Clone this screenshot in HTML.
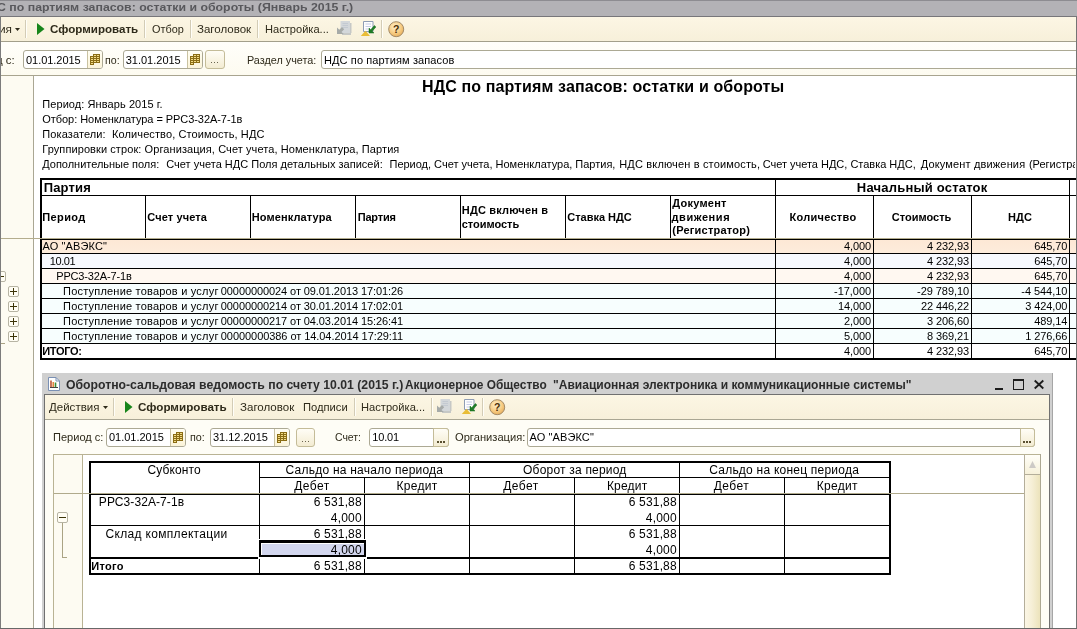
<!DOCTYPE html>
<html lang="ru"><head><meta charset="utf-8"><title>НДС по партиям запасов</title>
<style>
html,body{margin:0;padding:0}
body{width:1077px;height:629px;overflow:hidden;position:relative;background:#fff;font-family:"Liberation Sans",sans-serif;font-size:11px;color:#000}
.r{position:absolute;display:block}
.t{position:absolute;white-space:pre;line-height:1;display:block}
.k{background:#000}
.inp{position:absolute;box-sizing:border-box;background:#fff;border:1px solid #aca994;border-radius:3px}
.btn{position:absolute;box-sizing:border-box;border:1px solid #c4bc98;border-radius:3px;background:linear-gradient(#fffdf6,#f3ecd2)}
.sep{position:absolute;width:1px;background:#d3ccb6;box-shadow:1px 0 0 #fffef8}
svg{position:absolute;overflow:visible}
.ib{position:absolute;width:15px;height:17px;box-sizing:border-box;border-left:1px solid #c9c2a2;border-radius:0 2px 2px 0;background:linear-gradient(#fffdf2,#fbf4d8)}
.tx{position:absolute;left:0;top:0;width:1077px;height:629px;overflow:hidden;will-change:transform}

</style></head><body>
<svg width="0" height="0"><defs>
<radialGradient id="hg" cx=".42" cy=".35" r=".75"><stop offset="0" stop-color="#fff0cc"/><stop offset=".55" stop-color="#f7cd84"/><stop offset="1" stop-color="#e2a550"/></radialGradient>
<g id="ic1"><path d="M3.500 1h9.500v12h-9.500z" fill="#d3d7da"/><path d="M5 13h9v2h-9z" fill="#c6c8c6"/><path d="M13 3h1.500v10h-1.500z" fill="#c6c8c6"/><path d="M5.500 3.500h5.500M5.500 5.500h5.500M5.500 7.500h5.500" stroke="#c3c9d1" stroke-width="1"/><path d="M0 14V7.500l2.300 2.300 2.700-2.700 2.200 2.200-2.700 2.700L6.800 14z" fill="#a6aaa8"/></g>
<g id="ic2"><path d="M3.500 1.500h9.500v10h-9.500z" fill="#fefefe" stroke="#8e9cb4"/><path d="M5.500 4h5.500M5.500 6.500h5.500M5.500 9h3" stroke="#b9bfe0" stroke-width=".8"/><path d="M.8 16l4.700-5.200 4.500 5.200z" fill="#e9bd36"/><path d="M9 13V8l1.700 1.700 3.700-4.200 1.500 1.500-3.700 4.200L14 13z" fill="#1f7d26" stroke="#176a1e" stroke-width=".5"/></g>
<g id="ic3"><circle cx="8.200" cy="8.200" r="7.500" fill="url(#hg)" stroke="#a38a66" stroke-width="1"/><text x="8.300" y="12" text-anchor="middle" font-family="Liberation Sans, sans-serif" font-weight="bold" font-size="10.500" fill="#4a2e08">?</text></g>
<g id="calg"><path d="M0 2h4v9H0z" fill="#8a6c14"/><path d="M3 0h7v9H3z" fill="#8a6c14"/><path d="M1 3h2v1H1zM1 5h2v1H1zM1 7h2v1H1zM1 9h2v1H1z" fill="#f3dc86"/><path d="M4 1h2v1H4zM4 3h2v1H4zM4 5h2v1H4zM4 7h2v1H4zM7 1h2v1H7zM7 3h2v1H7zM7 5h2v1H7zM7 7h2v1H7z" fill="#f3dc86"/></g>
</defs></svg>
<!-- ===== main window chrome ===== -->
<i class="r" style="left:0;top:0;width:1077px;height:16px;background:#b3b2b6"></i>
<i class="r" style="left:0;top:0;width:1077px;height:1px;background:#8d8c91"></i>
<i class="r" style="left:0;top:16px;width:1077px;height:1px;background:#77767a"></i>
<i class="r" style="left:0;top:17px;width:1077px;height:24px;background:linear-gradient(#fcf6e4,#f7f0da)"></i>
<i class="r" style="left:0;top:41px;width:1077px;height:1px;background:#a39f8b"></i>
<i class="r" style="left:0;top:42px;width:1077px;height:33px;background:linear-gradient(#fffefa,#fdfbf0)"></i>
<i class="r" style="left:0;top:75px;width:1077px;height:1px;background:#a8a48f"></i>
<!-- group column -->
<i class="r" style="left:1px;top:76px;width:32px;height:552px;background:#fdfbf2"></i>
<i class="r" style="left:33px;top:76px;width:1px;height:552px;background:#aaa793"></i>
<!-- window borders -->

<!-- toolbar items -->
<svg style="left:15px;top:28px" width="5" height="3" viewBox="0 0 5 3"><path d="M0 0h5L2.5 3z" fill="#2e2a1a"/></svg>
<i class="sep" style="left:25px;top:20px;height:18px"></i>
<svg style="left:37px;top:23px" width="8" height="12" viewBox="0 0 8 12"><path d="M0 0L7.5 6L0 12z" fill="#17851a"/></svg>
<i class="sep" style="left:144px;top:20px;height:18px"></i>
<i class="sep" style="left:190px;top:20px;height:18px"></i>
<i class="sep" style="left:257px;top:20px;height:18px"></i>
<i class="sep" style="left:381px;top:20px;height:18px"></i>
<svg style="left:337px;top:20px" width="16" height="16" viewBox="0 0 16 16"><use href="#ic1"/></svg>
<svg style="left:360px;top:20px" width="17" height="16" viewBox="0 0 17 16"><use href="#ic2"/></svg>
<svg style="left:388px;top:21px" width="17" height="17" viewBox="0 0 17 17"><use href="#ic3"/></svg>

<!-- filter row -->
<div class="inp" style="left:23px;top:50px;width:80px;height:19px"></div><div class="ib" style="left:87px;top:51px"></div>
<div class="inp" style="left:123px;top:50px;width:80px;height:19px"></div><div class="ib" style="left:187px;top:51px"></div>
<div class="btn" style="left:205px;top:50px;width:20px;height:19px"></div>
<div class="inp" style="left:321px;top:50px;width:770px;height:19px"></div>
<svg style="left:90px;top:54px" width="10" height="11" viewBox="0 0 10 11"><use href="#calg"/></svg>
<svg style="left:190px;top:54px" width="10" height="11" viewBox="0 0 10 11"><use href="#calg"/></svg>
<i class="r" style="left:211px;top:62px;width:1px;height:1px;background:#6a6450;box-shadow:3px 0 0 #6a6450,6px 0 0 #6a6450"></i>

<!-- ===== main table ===== -->
<i class="r" style="left:42px;top:240px;width:1034px;height:13px;background:linear-gradient(#fde8d5,#fdecdc)"></i>
<i class="r" style="left:42px;top:254px;width:1034px;height:14px;background:#f7f9fe"></i>
<i class="r" style="left:42px;top:269px;width:1034px;height:14px;background:#fff8f1"></i>
<i class="r" style="left:42px;top:284px;width:1034px;height:59px;background:#f7fefe"></i>
<!-- horizontals -->
<i class="r k" style="left:40px;top:178px;width:1036px;height:2px"></i>
<i class="r k" style="left:40px;top:195px;width:1036px;height:1px"></i>
<i class="r k" style="left:40px;top:239px;width:1036px;height:1px"></i>
<i class="r k" style="left:40px;top:253px;width:1036px;height:1px"></i>
<i class="r k" style="left:40px;top:268px;width:1036px;height:1px"></i>
<i class="r k" style="left:40px;top:283px;width:1036px;height:1px"></i>
<i class="r k" style="left:40px;top:298px;width:1036px;height:1px"></i>
<i class="r k" style="left:40px;top:313px;width:1036px;height:1px"></i>
<i class="r k" style="left:40px;top:328px;width:1036px;height:1px"></i>
<i class="r k" style="left:40px;top:343px;width:1036px;height:1px"></i>
<i class="r k" style="left:40px;top:358px;width:1036px;height:2px"></i>
<!-- verticals -->
<i class="r k" style="left:40px;top:178px;width:2px;height:182px"></i>
<i class="r k" style="left:145px;top:195px;width:1px;height:43px"></i>
<i class="r k" style="left:250px;top:195px;width:1px;height:43px"></i>
<i class="r k" style="left:355px;top:195px;width:1px;height:43px"></i>
<i class="r k" style="left:460px;top:195px;width:1px;height:43px"></i>
<i class="r k" style="left:565px;top:195px;width:1px;height:43px"></i>
<i class="r k" style="left:670px;top:195px;width:1px;height:43px"></i>
<i class="r k" style="left:775px;top:178px;width:1px;height:182px"></i>
<i class="r k" style="left:873px;top:195px;width:1px;height:165px"></i>
<i class="r k" style="left:971px;top:195px;width:1px;height:165px"></i>
<i class="r k" style="left:1069px;top:178px;width:1px;height:182px"></i>
<i class="r" style="left:1px;top:238px;width:1075px;height:1px;background:#b4ad8e"></i>
<!-- plus boxes -->
<svg style="left:8px;top:286px" width="11" height="11" viewBox="0 0 11 11"><use href="#plus"/></svg>
<svg style="left:8px;top:301px" width="11" height="11" viewBox="0 0 11 11"><use href="#plus"/></svg>
<svg style="left:8px;top:316px" width="11" height="11" viewBox="0 0 11 11"><use href="#plus"/></svg>
<svg style="left:8px;top:331px" width="11" height="11" viewBox="0 0 11 11"><use href="#plus"/></svg>
<svg width="0" height="0"><defs><g id="plus"><rect x=".5" y=".5" width="10" height="10" rx="1.500" fill="#fffdf4" stroke="#b7b4a4"/><path d="M2 5.500h7M5.500 2v7" stroke="#3c3408" stroke-width="1"/></g>
<g id="minus"><rect x=".5" y=".5" width="10" height="10" rx="1.500" fill="#fffdf4" stroke="#b7b4a4"/><path d="M2 5.500h7" stroke="#3c3408" stroke-width="1"/></g></defs></svg>
<svg style="left:-5px;top:271px" width="11" height="11" viewBox="0 0 11 11"><use href="#minus"/></svg>
<i class="r" style="left:1px;top:343px;width:4px;height:1px;background:#aaa384"></i>

<!-- ===== sub window ===== -->
<i class="r" style="left:42px;top:373px;width:1011px;height:256px;background:#d0d0d0"></i>
<i class="r" style="left:1052px;top:373px;width:1px;height:256px;background:#a6a6a6"></i>
<i class="r" style="left:44px;top:394px;width:1006px;height:235px;background:#707070"></i>
<i class="r" style="left:45px;top:395px;width:1004px;height:234px;background:#fefdf6"></i>
<i class="r" style="left:45px;top:395px;width:1004px;height:24px;background:linear-gradient(#fcf6e4,#f7f0da)"></i>
<i class="r" style="left:45px;top:419px;width:1004px;height:1px;background:#a9a693"></i>
<!-- title icon -->
<svg style="left:48px;top:377px" width="12" height="14" viewBox="0 0 12 14"><path d="M.5 .5h7.500l3.500 3.500v9.500h-11z" fill="#fff" stroke="#7a90b4"/><path d="M8 .5v3.500h3.500" fill="none" stroke="#7a90b4"/><path d="M2 10.500h8" stroke="#444"/><path d="M3 10V3.500" stroke="#b03a1c" stroke-width="1.400"/><path d="M5.200 10V5" stroke="#e0782a" stroke-width="1.400"/><path d="M7.500 10V5.500" stroke="#3a8a34" stroke-width="1.600"/></svg>
<!-- window buttons -->
<i class="r" style="left:995px;top:388px;width:8px;height:2px;background:#1c1c1c"></i>
<i class="r" style="left:1013px;top:379px;width:11px;height:11px;box-sizing:border-box;border:1px solid #1c1c1c;border-top-width:2px"></i>
<svg style="left:1034px;top:380px" width="10" height="9" viewBox="0 0 10 9"><path d="M.7 .5l8.600 8M9.300 .5L.7 8.500" stroke="#1c1c1c" stroke-width="1.800"/></svg>
<!-- toolbar -->
<svg style="left:103px;top:406px" width="5" height="3" viewBox="0 0 5 3"><path d="M0 0h5L2.500 3z" fill="#2e2a1a"/></svg>
<i class="sep" style="left:113px;top:398px;height:18px"></i>
<svg style="left:125px;top:401px" width="8" height="12" viewBox="0 0 8 12"><path d="M0 0L7.500 6L0 12z" fill="#17851a"/></svg>
<i class="sep" style="left:232px;top:398px;height:18px"></i>
<i class="sep" style="left:354px;top:398px;height:18px"></i>
<i class="sep" style="left:431px;top:398px;height:18px"></i>
<i class="sep" style="left:482px;top:398px;height:18px"></i>
<svg style="left:437px;top:398px" width="16" height="16" viewBox="0 0 16 16"><use href="#ic1"/></svg>
<svg style="left:461px;top:398px" width="17" height="16" viewBox="0 0 17 16"><use href="#ic2"/></svg>
<svg style="left:489px;top:399px" width="17" height="17" viewBox="0 0 17 17"><use href="#ic3"/></svg>
<!-- filter row -->
<div class="inp" style="left:106px;top:428px;width:80px;height:19px"></div><div class="ib" style="left:170px;top:429px"></div>
<div class="inp" style="left:210px;top:428px;width:80px;height:19px"></div><div class="ib" style="left:274px;top:429px"></div>
<div class="btn" style="left:296px;top:428px;width:19px;height:19px"></div>
<div class="inp" style="left:369px;top:428px;width:80px;height:19px"></div>
<div class="btn" style="left:433px;top:428px;width:16px;height:19px;border-radius:0 3px 3px 0"></div>
<div class="inp" style="left:527px;top:428px;width:508px;height:19px"></div>
<div class="btn" style="left:1020px;top:428px;width:15px;height:19px;border-radius:0 3px 3px 0"></div>
<svg style="left:173px;top:432px" width="10" height="11" viewBox="0 0 10 11"><use href="#calg"/></svg>
<svg style="left:277px;top:432px" width="10" height="11" viewBox="0 0 10 11"><use href="#calg"/></svg>
<i class="r" style="left:302px;top:441px;width:1px;height:1px;background:#6a6450;box-shadow:3px 0 0 #6a6450,6px 0 0 #6a6450"></i>
<i class="r" style="left:437px;top:441px;width:2px;height:2px;background:#5a5030;box-shadow:3px 0 0 #5a5030,6px 0 0 #5a5030"></i>
<i class="r" style="left:1023px;top:441px;width:2px;height:2px;background:#5a5030;box-shadow:3px 0 0 #5a5030,6px 0 0 #5a5030"></i>
<!-- sheet -->
<i class="r" style="left:53px;top:454px;width:988px;height:175px;background:#fff"></i>
<i class="r" style="left:53px;top:454px;width:988px;height:1px;background:#b9b394"></i>
<i class="r" style="left:53px;top:454px;width:1px;height:174px;background:#b9b394"></i>
<i class="r" style="left:54px;top:455px;width:28px;height:174px;background:#fdfbf2"></i>
<i class="r" style="left:82px;top:455px;width:1px;height:174px;background:#b9b394"></i>
<!-- scrollbar -->
<i class="r" style="left:1024px;top:455px;width:16px;height:174px;background:linear-gradient(90deg,#fcf7e8,#f6efd6 50%,#ece3bb)"></i>
<i class="r" style="left:1024px;top:455px;width:1px;height:174px;background:#b4ae9a"></i>
<i class="r" style="left:1040px;top:454px;width:1px;height:175px;background:#aca892"></i>
<i class="r" style="left:1025px;top:455px;width:15px;height:20px;background:linear-gradient(#fffef8,#f6f0d8)"></i>
<i class="r" style="left:1025px;top:474px;width:15px;height:1px;background:#b4ae9a"></i>
<svg style="left:1029px;top:461px" width="7" height="7" viewBox="0 0 7 7"><path d="M3.500 0L7 7H0z" fill="#cdcac6"/></svg>
<!-- sub table -->
<i class="r k" style="left:89px;top:461px;width:802px;height:2px"></i>
<i class="r k" style="left:260px;top:477px;width:630px;height:1px"></i>
<i class="r k" style="left:89px;top:494px;width:802px;height:1px"></i>
<i class="r k" style="left:89px;top:525px;width:802px;height:1px"></i>
<i class="r k" style="left:89px;top:557px;width:802px;height:2px"></i>
<i class="r k" style="left:89px;top:573px;width:802px;height:2px"></i>
<i class="r k" style="left:89px;top:461px;width:2px;height:114px"></i>
<i class="r k" style="left:259px;top:461px;width:1px;height:114px"></i>
<i class="r k" style="left:364px;top:477px;width:1px;height:98px"></i>
<i class="r k" style="left:469px;top:461px;width:1px;height:114px"></i>
<i class="r k" style="left:574px;top:477px;width:1px;height:98px"></i>
<i class="r k" style="left:679px;top:461px;width:1px;height:114px"></i>
<i class="r k" style="left:784px;top:477px;width:1px;height:98px"></i>
<i class="r k" style="left:889px;top:461px;width:2px;height:114px"></i>
<i class="r" style="left:54px;top:493px;width:970px;height:1px;background:#b0aa8c"></i>
<!-- selected cell -->
<i class="r" style="left:258px;top:539px;width:109px;height:20px;background:#fff"></i>
<i class="r k" style="left:259px;top:540px;width:107px;height:17px"></i>
<i class="r" style="left:261px;top:543px;width:103px;height:12px;background:#fff"></i>
<i class="r" style="left:262px;top:544px;width:102px;height:11px;background:#d2d6ee"></i>
<!-- group marks -->
<svg style="left:57px;top:512px" width="11" height="11" viewBox="0 0 11 11"><use href="#minus"/></svg>
<i class="r" style="left:62px;top:523px;width:1px;height:35px;background:#aaa384"></i>
<i class="r" style="left:62px;top:557px;width:5px;height:1px;background:#aaa384"></i>

<div class="tx">
<span class="t" style="left:-2.95px;top:1.60px;font-size:11.5px;font-weight:bold;color:#58585c;transform:scaleX(1.0707);transform-origin:0 0;">С по партиям запасов: остатки и обороты (Январь 2015 г.)</span>
<span class="t" style="left:-1.31px;top:24.00px;font-size:11px;color:#2e2a1a;transform:scaleX(1.0760);transform-origin:0 0;">ия</span>
<span class="t" style="left:50.08px;top:24.00px;font-size:11px;font-weight:bold;color:#2e2a1a;transform:scaleX(1.0529);transform-origin:0 0;">Сформировать</span>
<span class="t" style="left:151.88px;top:24.00px;font-size:11px;color:#2e2a1a;transform:scaleX(0.9903);transform-origin:0 0;">Отбор</span>
<span class="t" style="left:197.09px;top:24.00px;font-size:11px;color:#2e2a1a;transform:scaleX(1.0466);transform-origin:0 0;">Заголовок</span>
<span class="t" style="left:264.89px;top:24.00px;font-size:11px;color:#2e2a1a;transform:scaleX(1.0079);transform-origin:0 0;">Настройка...</span>
<span class="t" style="left:-4.21px;top:55.00px;font-size:11px;color:#2e2a1a;transform:scaleX(1.0388);transform-origin:0 0;">д с:</span>
<span class="t" style="left:25.98px;top:55.00px;font-size:11px;letter-spacing:-0.033px;">01.01.2015</span>
<span class="t" style="left:105.08px;top:55.00px;font-size:11px;color:#2e2a1a;transform:scaleX(0.9663);transform-origin:0 0;">по:</span>
<span class="t" style="left:125.78px;top:55.00px;font-size:11px;letter-spacing:-0.013px;">31.01.2015</span>
<span class="t" style="left:247.09px;top:55.00px;font-size:11px;color:#2e2a1a;transform:scaleX(0.9834);transform-origin:0 0;">Раздел учета:</span>
<span class="t" style="left:323.99px;top:55.00px;font-size:11px;letter-spacing:0.112px;">НДС по партиям запасов</span>
<span class="t" style="left:421.96px;top:79.00px;font-size:16px;font-weight:bold;letter-spacing:0.121px;">НДС по партиям запасов: остатки и обороты</span>
<span class="t" style="left:42.28px;top:99.00px;font-size:11px;letter-spacing:0.078px;">Период: Январь 2015 г.</span>
<span class="t" style="left:42.28px;top:114.00px;font-size:11px;letter-spacing:-0.049px;">Отбор: Номенклатура = РРС3-32А-7-1в</span>
<span class="t" style="left:42.28px;top:129.00px;font-size:11px;letter-spacing:0.106px;">Показатели:  Количество, Стоимость, НДС</span>
<span class="t" style="left:42.28px;top:144.00px;font-size:11px;letter-spacing:0.086px;">Группировки строк: Организация, Счет учета, Номенклатура, Партия</span>
<span class="t" style="left:42.28px;top:159.00px;font-size:11px;letter-spacing:-0.024px;">Дополнительные поля:</span>
<span class="t" style="left:166.28px;top:159.00px;font-size:11px;letter-spacing:0.010px;">Счет учета НДС Поля детальных записей:</span>
<span class="t" style="left:389.49px;top:159.00px;font-size:11px;letter-spacing:-0.008px;">Период, Счет учета, Номенклатура, Партия,</span>
<span class="t" style="left:619.28px;top:159.00px;font-size:11px;letter-spacing:0.157px;">НДС включен в стоимость,</span>
<span class="t" style="left:762.68px;top:159.00px;font-size:11px;letter-spacing:-0.013px;">Счет учета НДС, Ставка НДС,</span>
<span class="t" style="left:920.68px;top:159.00px;font-size:11px;letter-spacing:0.159px;">Документ движения</span>
<span class="t" style="left:1028.88px;top:159.00px;font-size:11px;width:46.5px;overflow:hidden;">(Регистратор)</span>
<span class="t" style="left:43.76px;top:181.00px;font-size:13px;font-weight:bold;letter-spacing:0.149px;">Партия</span>
<span class="t" style="left:42.28px;top:212.00px;font-size:11px;font-weight:bold;letter-spacing:0.395px;">Период</span>
<span class="t" style="left:147.28px;top:212.00px;font-size:11px;font-weight:bold;letter-spacing:0.124px;">Счет учета</span>
<span class="t" style="left:251.69px;top:212.00px;font-size:11px;font-weight:bold;letter-spacing:0.116px;">Номенклатура</span>
<span class="t" style="left:357.69px;top:212.00px;font-size:11px;font-weight:bold;letter-spacing:-0.190px;">Партия</span>
<span class="t" style="left:461.79px;top:205.00px;font-size:11px;font-weight:bold;letter-spacing:0.177px;">НДС включен в</span>
<span class="t" style="left:461.79px;top:219.00px;font-size:11px;font-weight:bold;letter-spacing:-0.029px;">стоимость</span>
<span class="t" style="left:567.28px;top:212.00px;font-size:11px;font-weight:bold;letter-spacing:-0.019px;">Ставка НДС</span>
<span class="t" style="left:672.28px;top:198.00px;font-size:11px;font-weight:bold;letter-spacing:0.245px;">Документ</span>
<span class="t" style="left:671.58px;top:212.00px;font-size:11px;font-weight:bold;letter-spacing:0.553px;">движения</span>
<span class="t" style="left:672.28px;top:225.00px;font-size:11px;font-weight:bold;letter-spacing:0.227px;">(Регистратор)</span>
<span class="t" style="left:856.86px;top:181.00px;font-size:13px;font-weight:bold;letter-spacing:0.204px;">Начальный остаток</span>
<span class="t" style="left:789.58px;top:212.00px;font-size:11px;font-weight:bold;letter-spacing:0.272px;">Количество</span>
<span class="t" style="left:891.68px;top:212.00px;font-size:11px;font-weight:bold;letter-spacing:0.024px;">Стоимость</span>
<span class="t" style="left:1007.99px;top:212.00px;font-size:11px;font-weight:bold;letter-spacing:0.132px;">НДС</span>
<span class="t" style="left:42.48px;top:241.00px;font-size:11px;letter-spacing:0.120px;">АО "АВЭКС"</span>
<span class="t" style="left:49.78px;top:256.00px;font-size:11px;letter-spacing:-0.420px;">10.01</span>
<span class="t" style="left:56.28px;top:271.00px;font-size:11px;letter-spacing:-0.141px;">РРС3-32А-7-1в</span>
<span class="t" style="left:63.08px;top:286.00px;font-size:11px;letter-spacing:0.201px;">Поступление товаров и услуг</span>
<span class="t" style="left:220.80px;top:286.00px;font-size:11px;letter-spacing:-0.087px;">00000000024 от 09.01.2013 17:01:26</span>
<span class="t" style="left:63.08px;top:301.00px;font-size:11px;letter-spacing:0.201px;">Поступление товаров и услуг</span>
<span class="t" style="left:220.80px;top:301.00px;font-size:11px;letter-spacing:-0.087px;">00000000214 от 30.01.2014 17:02:01</span>
<span class="t" style="left:63.08px;top:316.00px;font-size:11px;letter-spacing:0.201px;">Поступление товаров и услуг</span>
<span class="t" style="left:220.80px;top:316.00px;font-size:11px;letter-spacing:-0.087px;">00000000217 от 04.03.2014 15:26:41</span>
<span class="t" style="left:63.08px;top:331.00px;font-size:11px;letter-spacing:0.201px;">Поступление товаров и услуг</span>
<span class="t" style="left:220.80px;top:331.00px;font-size:11px;letter-spacing:-0.063px;">00000000386 от 14.04.2014 17:29:11</span>
<span class="t" style="left:42.28px;top:346.00px;font-size:11px;font-weight:bold;letter-spacing:-0.298px;">ИТОГО:</span>
<span class="t" style="left:844.10px;top:241.00px;font-size:11px;letter-spacing:-0.106px;">4,000</span>
<span class="t" style="left:927.10px;top:241.00px;font-size:11px;letter-spacing:-0.104px;">4 232,93</span>
<span class="t" style="left:1034.30px;top:241.00px;font-size:11px;letter-spacing:-0.109px;">645,70</span>
<span class="t" style="left:844.10px;top:256.00px;font-size:11px;letter-spacing:-0.106px;">4,000</span>
<span class="t" style="left:927.10px;top:256.00px;font-size:11px;letter-spacing:-0.104px;">4 232,93</span>
<span class="t" style="left:1034.30px;top:256.00px;font-size:11px;letter-spacing:-0.109px;">645,70</span>
<span class="t" style="left:844.10px;top:271.00px;font-size:11px;letter-spacing:-0.106px;">4,000</span>
<span class="t" style="left:927.10px;top:271.00px;font-size:11px;letter-spacing:-0.104px;">4 232,93</span>
<span class="t" style="left:1034.30px;top:271.00px;font-size:11px;letter-spacing:-0.109px;">645,70</span>
<span class="t" style="left:834.10px;top:286.00px;font-size:11px;letter-spacing:-0.045px;">-17,000</span>
<span class="t" style="left:917.10px;top:286.00px;font-size:11px;letter-spacing:-0.061px;">-29 789,10</span>
<span class="t" style="left:1021.30px;top:286.00px;font-size:11px;letter-spacing:-0.054px;">-4 544,10</span>
<span class="t" style="left:838.10px;top:301.00px;font-size:11px;letter-spacing:-0.109px;">14,000</span>
<span class="t" style="left:921.10px;top:301.00px;font-size:11px;letter-spacing:-0.104px;">22 446,22</span>
<span class="t" style="left:1025.30px;top:301.00px;font-size:11px;letter-spacing:-0.104px;">3 424,00</span>
<span class="t" style="left:844.10px;top:316.00px;font-size:11px;letter-spacing:-0.106px;">2,000</span>
<span class="t" style="left:927.10px;top:316.00px;font-size:11px;letter-spacing:-0.104px;">3 206,60</span>
<span class="t" style="left:1034.30px;top:316.00px;font-size:11px;letter-spacing:-0.109px;">489,14</span>
<span class="t" style="left:844.10px;top:331.00px;font-size:11px;letter-spacing:-0.106px;">5,000</span>
<span class="t" style="left:927.10px;top:331.00px;font-size:11px;letter-spacing:-0.104px;">8 369,21</span>
<span class="t" style="left:1025.30px;top:331.00px;font-size:11px;letter-spacing:-0.104px;">1 276,66</span>
<span class="t" style="left:844.10px;top:346.00px;font-size:11px;letter-spacing:-0.106px;">4,000</span>
<span class="t" style="left:927.10px;top:346.00px;font-size:11px;letter-spacing:-0.104px;">4 232,93</span>
<span class="t" style="left:1034.30px;top:346.00px;font-size:11px;letter-spacing:-0.109px;">645,70</span>
<span class="t" style="left:65.92px;top:379.00px;font-size:12px;font-weight:bold;color:#2c2c2c;transform:scaleX(1.0196);transform-origin:0 0;">Оборотно-сальдовая ведомость по счету 10.01 (2015 г.)</span>
<span class="t" style="left:405.02px;top:379.00px;font-size:12px;font-weight:bold;color:#2c2c2c;transform:scaleX(0.9900);transform-origin:0 0;">Акционерное Общество</span>
<span class="t" style="left:552.82px;top:379.00px;font-size:12px;font-weight:bold;color:#2c2c2c;transform:scaleX(1.0038);transform-origin:0 0;">"Авиационная электроника и коммуникационные системы"</span>
<span class="t" style="left:49.28px;top:402.00px;font-size:11px;color:#2e2a1a;transform:scaleX(1.0462);transform-origin:0 0;">Действия</span>
<span class="t" style="left:137.98px;top:402.00px;font-size:11px;font-weight:bold;color:#2e2a1a;transform:scaleX(1.0589);transform-origin:0 0;">Сформировать</span>
<span class="t" style="left:240.28px;top:402.00px;font-size:11px;color:#2e2a1a;transform:scaleX(1.0486);transform-origin:0 0;">Заголовок</span>
<span class="t" style="left:303.19px;top:402.00px;font-size:11px;color:#2e2a1a;transform:scaleX(1.0177);transform-origin:0 0;">Подписи</span>
<span class="t" style="left:360.79px;top:402.00px;font-size:11px;color:#2e2a1a;transform:scaleX(1.0127);transform-origin:0 0;">Настройка...</span>
<span class="t" style="left:52.68px;top:432.00px;font-size:11px;color:#2e2a1a;transform:scaleX(1.0045);transform-origin:0 0;">Период с:</span>
<span class="t" style="left:108.98px;top:432.00px;font-size:11px;letter-spacing:-0.013px;">01.01.2015</span>
<span class="t" style="left:190.09px;top:432.00px;font-size:11px;color:#2e2a1a;transform:scaleX(0.9795);transform-origin:0 0;">по:</span>
<span class="t" style="left:212.98px;top:432.00px;font-size:11px;letter-spacing:-0.013px;">31.12.2015</span>
<span class="t" style="left:334.99px;top:432.00px;font-size:11px;color:#2e2a1a;transform:scaleX(0.9498);transform-origin:0 0;">Счет:</span>
<span class="t" style="left:372.20px;top:432.00px;font-size:11px;letter-spacing:-0.146px;">10.01</span>
<span class="t" style="left:454.79px;top:432.00px;font-size:11px;color:#2e2a1a;transform:scaleX(1.0133);transform-origin:0 0;">Организация:</span>
<span class="t" style="left:529.49px;top:432.00px;font-size:11px;letter-spacing:0.110px;">АО "АВЭКС"</span>
<span class="t" style="left:147.52px;top:464.00px;font-size:12px;letter-spacing:0.107px;">Субконто</span>
<span class="t" style="left:285.52px;top:464.00px;font-size:12px;letter-spacing:0.235px;">Сальдо на начало периода</span>
<span class="t" style="left:523.02px;top:464.00px;font-size:12px;letter-spacing:0.206px;">Оборот за период</span>
<span class="t" style="left:709.22px;top:464.00px;font-size:12px;letter-spacing:0.230px;">Сальдо на конец периода</span>
<span class="t" style="left:294.22px;top:480.00px;font-size:12px;letter-spacing:0.474px;">Дебет</span>
<span class="t" style="left:503.22px;top:480.00px;font-size:12px;letter-spacing:0.474px;">Дебет</span>
<span class="t" style="left:713.72px;top:480.00px;font-size:12px;letter-spacing:0.474px;">Дебет</span>
<span class="t" style="left:396.52px;top:480.00px;font-size:12px;letter-spacing:0.280px;">Кредит</span>
<span class="t" style="left:606.92px;top:480.00px;font-size:12px;letter-spacing:0.196px;">Кредит</span>
<span class="t" style="left:816.72px;top:480.00px;font-size:12px;letter-spacing:0.296px;">Кредит</span>
<span class="t" style="left:98.82px;top:496.00px;font-size:12px;letter-spacing:0.083px;">РРС3-32А-7-1в</span>
<span class="t" style="left:105.62px;top:528.00px;font-size:12px;letter-spacing:0.312px;">Склад комплектации</span>
<span class="t" style="left:91.28px;top:561.00px;font-size:11px;font-weight:bold;letter-spacing:0.280px;">Итого</span>
<span class="t" style="left:313.80px;top:496.00px;font-size:12px;letter-spacing:0.160px;">6 531,88</span>
<span class="t" style="left:330.80px;top:511.50px;font-size:12px;letter-spacing:0.194px;">4,000</span>
<span class="t" style="left:313.80px;top:528.00px;font-size:12px;letter-spacing:0.160px;">6 531,88</span>
<span class="t" style="left:330.80px;top:543.50px;font-size:12px;letter-spacing:0.194px;">4,000</span>
<span class="t" style="left:313.80px;top:560.00px;font-size:12px;letter-spacing:0.160px;">6 531,88</span>
<span class="t" style="left:628.80px;top:496.00px;font-size:12px;letter-spacing:0.160px;">6 531,88</span>
<span class="t" style="left:645.80px;top:511.50px;font-size:12px;letter-spacing:0.194px;">4,000</span>
<span class="t" style="left:628.80px;top:528.00px;font-size:12px;letter-spacing:0.160px;">6 531,88</span>
<span class="t" style="left:645.80px;top:543.50px;font-size:12px;letter-spacing:0.194px;">4,000</span>
<span class="t" style="left:628.80px;top:560.00px;font-size:12px;letter-spacing:0.160px;">6 531,88</span>
</div>
<div class="tx">
<i class="r" style="left:0;top:16px;width:1px;height:613px;background:#7c7c7c"></i>
<i class="r" style="left:1076px;top:17px;width:1px;height:612px;background:#747474"></i>
<i class="r" style="left:0;top:628px;width:1077px;height:1px;background:#686868"></i>
</div>
</body></html>
